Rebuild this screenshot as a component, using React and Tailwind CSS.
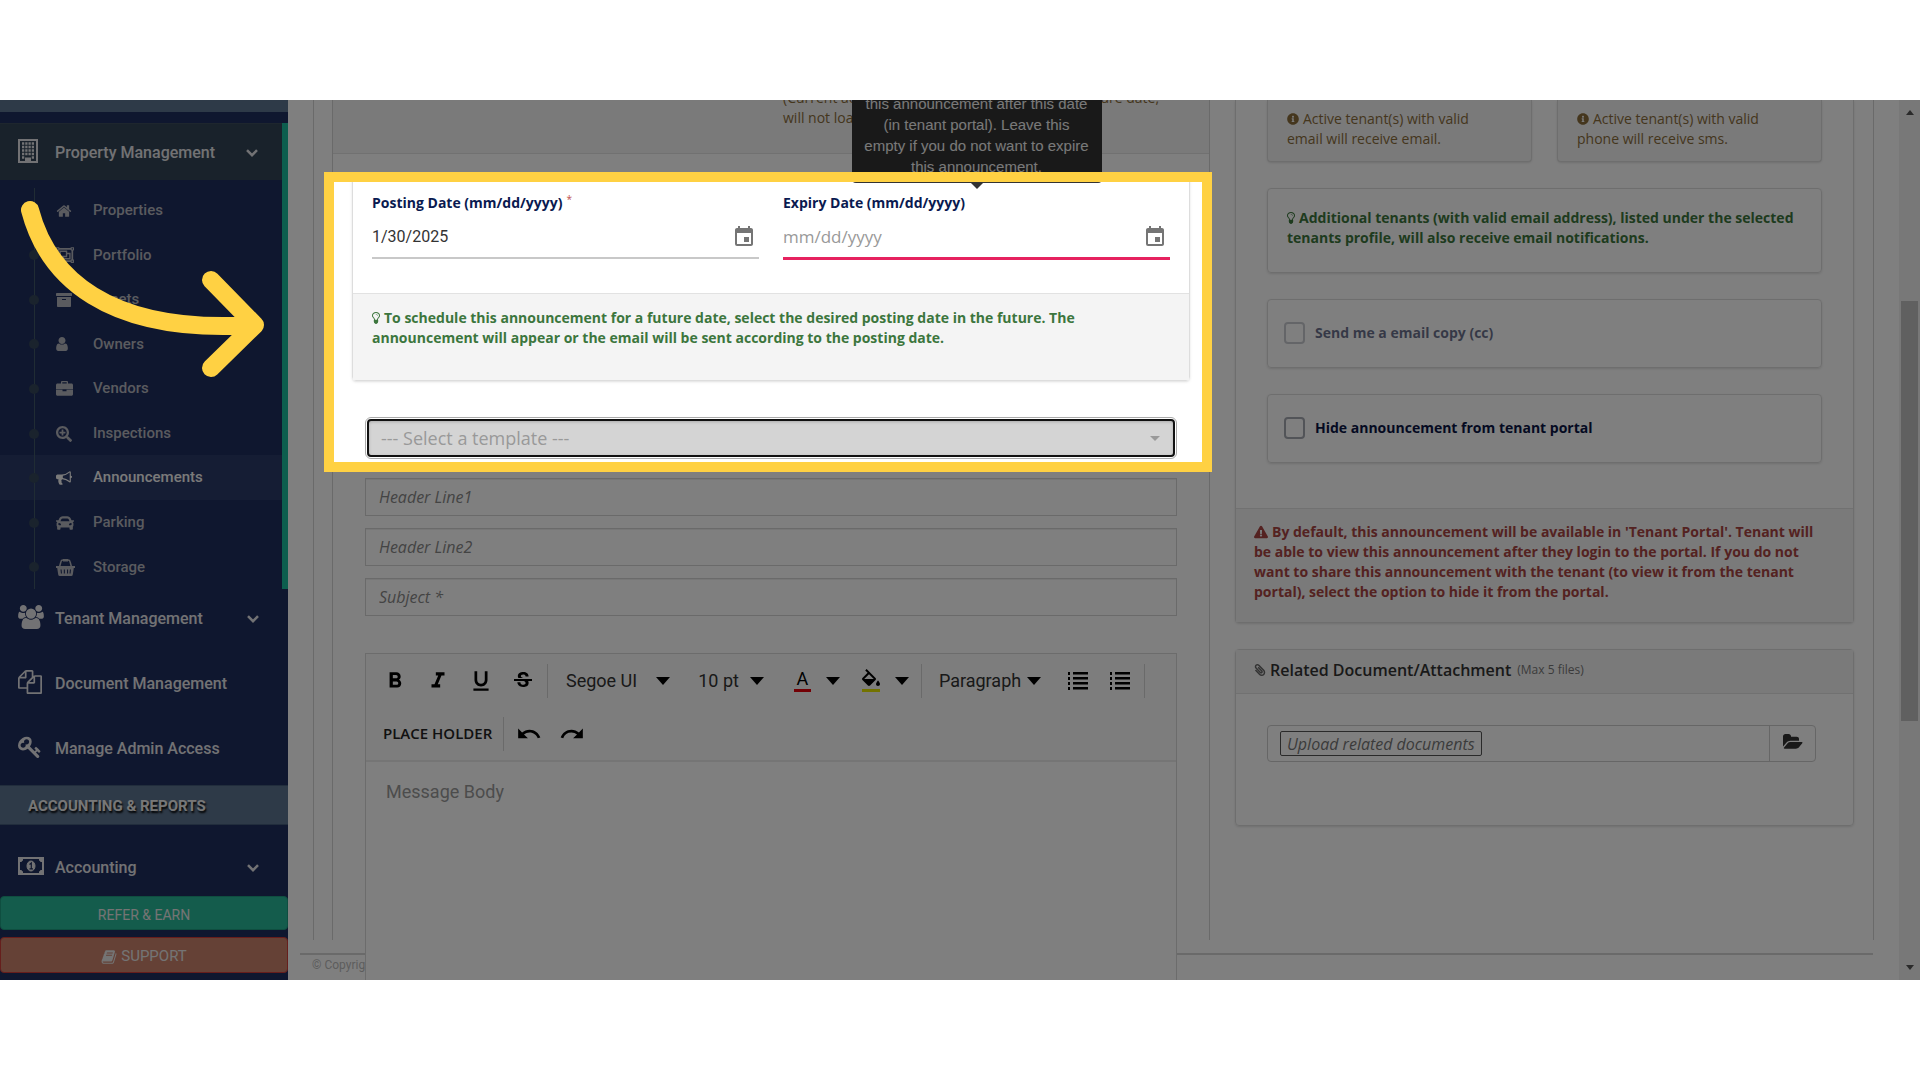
import React from "react";
import {
  FaRegObjectGroup, FaArchive, FaSearchPlus, FaCar,
  FaInfoCircle, FaPaperclip, FaExclamationTriangle,
} from "react-icons/fa";
import {
  MdFormatBold, MdFormatItalic, MdFormatUnderlined, MdStrikethroughS,
  MdUndo, MdRedo, MdEvent,
} from "react-icons/md";

const HOME = "M1472 992v480q0 26-19 45t-45 19h-384v-384h-256v384h-384q-26 0-45-19t-19-45v-480q0-1 .5-3t.5-3l575-474 575 474q1 2 1 6zm223-69l-62 74q-8 9-21 11h-3q-13 0-21-7l-692-577-692 577q-12 8-24 7-13-2-21-11l-62-74q-8-10-7-23.5t11-21.5l719-599q32-26 76-26t76 26l244 204v-195q0-14 9-23t23-9h192q14 0 23 9t9 23v408l219 182q10 8 11 21.5t-7 23.5z";
const USER = "M1536 1399q0 109-62.5 187t-150.5 78h-854q-88 0-150.5-78t-62.5-187q0-85 8.5-160.5t31.5-152 58.5-131 94-89 134.5-34.5q131 128 313 128t313-128q76 0 134.5 34.5t94 89 58.5 131 31.5 152 8.5 160.5zm-256-887q0 159-112.5 271.5t-271.5 112.5-271.5-112.5-112.5-271.5 112.5-271.5 271.5-112.5 271.5 112.5 112.5 271.5z";
const BULLHORN = "M1664 640q53 0 90.5 37.5t37.5 90.5-37.5 90.5-90.5 37.5v384q0 52-38 90t-90 38q-417-347-812-380-58 19-91 66t-31 100.5 40 92.5q-20 33-23 65.5t6 58 33.5 55 48 50 61.5 50.5q-29 58-111.5 83t-168.5 11.5-132-55.5q-7-23-29.5-87.5t-32-94.5-23-89-15-101 3.5-98.5 22-110.5h-122q-66 0-113-47t-47-113v-192q0-66 47-113t113-47h480q435 0 896-384 52 0 90 38t38 90v384zm-128 604v-954q-394 302-768 343v270q377 42 768 341z";
const USERS = "M593 896q-162 5-265 128h-134q-82 0-138-40.5t-56-118.5q0-353 124-353 6 0 43.5 21t97.5 42.5 119 21.5q67 0 133-23-5 37-5 66 0 139 81 256zm1071 637q0 120-73 189.5t-194 69.5h-874q-121 0-194-69.5t-73-189.5q0-53 3.5-103.5t14-109 26.5-108.5 43-97.5 62-81 85.5-53.5 111.5-20q10 0 43 21.5t73 48 107 48 135 21.5 135-21.5 107-48 73-48 43-21.5q61 0 111.5 20t85.5 53.5 62 81 43 97.5 26.5 108.5 14 109 3.5 103.5zm-1024-1277q0 106-75 181t-181 75-181-75-75-181 75-181 181-75 181 75 75 181zm704 384q0 159-112.5 271.5t-271.5 112.5-271.5-112.5-112.5-271.5 112.5-271.5 271.5-112.5 271.5 112.5 112.5 271.5zm576 225q0 78-56 118.5t-138 40.5h-134q-103-123-265-128 81-117 81-256 0-29-5-66 66 23 133 23 59 0 119-21.5t97.5-42.5 43.5-21q124 0 124 353zm-128-609q0 106-75 181t-181 75-181-75-75-181 75-181 181-75 181 75 75 181z";
const KEY = "M832 512q0-80-56-136t-136-56-136 56-56 136q0 42 19 83-41-19-83-19-80 0-136 56t-56 136 56 136 136 56 136-56 56-136q0-42-19-83 41 19 83 19 80 0 136-56t56-136zm851 704q0 17-49 66t-66 49q-9 0-28.5-16t-36.5-33-38.5-40-24.5-26l-96 96 220 220q28 28 28 68 0 42-39 81t-81 39q-40 0-68-28l-671-671q-176 131-365 131-163 0-265.5-102.5t-102.5-265.5q0-160 95-313t248-248 313-95q163 0 265.5 102.5t102.5 265.5q0 189-131 365l355 355 96-96q-3-3-26-24.5t-40-38.5-33-36.5-16-28.5q0-17 49-66t66-49q13 0 23 10 6 6 46 44.5t82 79.5 86.5 86 73 78 28.5 41z";
const FILES = "M1696 384q40 0 68 28t28 68v1216q0 40-28 68t-68 28h-960q-40 0-68-28t-28-68v-288h-544q-40 0-68-28t-28-68v-672q0-40 20-88t48-76l408-408q28-28 76-48t88-20h416q40 0 68 28t28 68v328q68-40 128-40h416zm-544 213l-299 299h299v-299zm-640-384l-299 299h299v-299zm196 647l316-316v-416h-384v416q0 40-28 68t-68 28h-416v640h512v-256q0-40 20-88t48-76zm956 804v-1152h-384v416q0 40-28 68t-68 28h-416v640h896z";
const BULB = "M1120 576q0 13-9.5 22.5t-22.5 9.5-22.5-9.5-9.5-22.5q0-46-54-71t-106-25q-13 0-22.5-9.5t-9.5-22.5 9.5-22.5 22.5-9.5q50 0 99.5 16t87 54 37.5 90zm160 0q0-72-34.5-134t-90-101.5-123-62-136.5-22.5-136.5 22.5-123 62-90 101.5-34.5 134q0 101 68 180 10 11 30.5 33t30.5 33q128 153 141 298h228q13-145 141-298 10-11 30.5-33t30.5-33q68-79 68-180zm128 0q0 155-103 268-45 49-74.5 87t-59.5 95.5-34 107.5q47 28 47 82 0 37-25 64 25 27 25 64 0 52-45 81 13 23 13 47 0 46-31.5 71t-77.5 25q-20 44-60 70t-87 26-87-26-60-70q-46 0-77.5-25t-31.5-71q0-24 13-47-45-29-45-81 0-37 25-64-25-27-25-64 0-54 47-82-4-50-34-107.5t-59.5-95.5-74.5-87q-103-113-103-268 0-99 44.5-184.5t117-142 164-89 186.5-32.5 186.5 32.5 164 89 117 142 44.5 184.5z";
const BOOK = "M1703 478q40 57 18 129l-275 906q-19 64-76.5 107.5t-122.5 43.5h-923q-77 0-148.5-53.5t-99.5-131.5q-24-67-2-127 0-4 3-27t4-37q1-8-3-21.5t-3-19.5q2-11 8-21t16.5-23.5 16.500-23.500q23-38 45-91.500t30-91.500q3-10 .5-30t-.5-28q3-11 17-28t17-23q21-36 42-92t25-90q1-9-2.5-32t.5-28q4-13 22-30.5t22-22.5q19-26 42.5-84.5t27.5-96.500q1-8-3-25.500t-2-26.500q2-8 9-18t18-23 17-21q8-12 16.500-30.500t15-35 16-36 19.500-32 26.500-23.500 36-11.500 47.500 5.500l-1 3q38-9 51-9h761q74 0 114 56t18 130l-274 906q-36 119-71.500 153.500t-128.500 34.500h-869q-27 0-38 15-11 16-1 43 24 70 144 70h923q29 0 56-15.500t35-41.500l300-987q7-22 5-57 38 15 59 43zm-1064 2q-4 13 2 22.500t20 9.500h608q13 0 25.500-9.500t16.500-22.500l21-64q4-13-2-22.500t-20-9.500h-608q-13 0-25.500 9.500t-16.500 22.500zm-83 256q-4 13 2 22.500t20 9.500h608q13 0 25.500-9.500t16.500-22.500l21-64q4-13-2-22.500t-20-9.500h-608q-13 0-25.500 9.500t-16.500 22.500z";
const FOLDER = "M1879 952q0 31-31 66l-336 396q-43 51-120.5 86.500t-143.500 35.500h-1088q-34 0-60.500-13t-26.500-43q0-31 31-66l336-396q43-51 120.500-86.500t143.500-35.500h1088q34 0 60.500 13t26.500 43zm-343-344v160h-832q-94 0-197 47.500t-164 119.500l-337 396-5 6q0-4-.5-12.500t-.5-12.500v-960q0-92 66-158t158-66h320q92 0 158 66t66 158v32h544q92 0 158 66t66 158z";
const PAINT = "M16.560 8.940L7.620 0 6.210 1.410l2.380 2.380-5.150 5.150c-.59.59-.59 1.540 0 2.120l5.500 5.500c.29.29.68.44 1.060.44s.77-.15 1.060-.44l5.500-5.500c.59-.58.59-1.530 0-2.120zM5.210 10L10 5.210 14.790 10H5.210zM19 11.500s-2 2.170-2 3.500c0 1.100.9 2 2 2s2-.9 2-2c0-1.330-2-3.500-2-3.500z";

function Glyph({ d, box = "0 0 1792 1792", className }) {
  return (
    <svg viewBox={box} fill="currentColor" className={className} aria-hidden="true">
      <path d={d} />
    </svg>
  );
}

function Building() {
  return (
    <svg viewBox="0 0 20 24" className="h-6 w-5" fill="none" stroke="currentColor" aria-hidden="true">
      <path d="M1 1h18v22H1z" strokeWidth="2" />
      <path d="M4 4.500h12M4 8h12M4 11.500h12M4 15h12" strokeWidth="2.500" strokeDasharray="2.250 1" />
      <path d="M4 18.500h2.250M13.750 18.500H16" strokeWidth="2.500" />
      <path d="M7 20.500h6" strokeWidth="4" />
    </svg>
  );
}

function Briefcase() {
  return (
    <svg viewBox="0 0 17 15" className="h-[15px] w-[17px]" fill="currentColor" aria-hidden="true">
      <path d="M5 2.500V1.200C5 .5 5.500 0 6.200 0h4.600c.7 0 1.200.5 1.200 1.200v1.300h3.500c.8 0 1.500.7 1.500 1.500v4.200H0V4c0-.8.700-1.500 1.500-1.500zm1.300 0h4.400V1.300H6.300zM0 8.700h6.500v1.500h4V8.700H17v4.500c0 .8-.7 1.500-1.500 1.500h-14C.7 14.700 0 14 0 13.200z" />
    </svg>
  );
}

function Basket() {
  return (
    <svg viewBox="0 0 19 17" className="h-[17px] w-[19px]" aria-hidden="true">
      <path d="M3.500 8L5 2.500Q5.300 1 7 1h5q1.700 0 2 1.500L15.500 8" fill="none" stroke="currentColor" strokeWidth="1.500" />
      <path d="M7 0h5v2.500H7zM0 7h19v2h-1.200l-1 6.500q-.2 1.500-1.600 1.500H3.800q-1.400 0-1.600-1.500L1.200 9H0zm4.500 3.500l.4 4h1.100l-.4-4zm3.300 0v4h1.100v-4zm3.200 0v4h1.100v-4zm2.900 0l-.4 4h1.100l.4-4z" fill="currentColor" fillRule="evenodd" />
    </svg>
  );
}

function Banknote() {
  return (
    <svg viewBox="0 0 26 18" className="h-[18px] w-[26px]" fill="none" stroke="currentColor" aria-hidden="true">
      <path d="M1 1h24v16H1z" strokeWidth="2" />
      <path d="M1 1h4a4 4 0 0 1-4 4zM25 1h-4a4 4 0 0 0 4 4zM1 17h4a4 4 0 0 0-4-4zM25 17h-4a4 4 0 0 1 4-4z" fill="currentColor" />
      <ellipse cx="13" cy="9" rx="4" ry="5" fill="currentColor" />
      <path d="M11.500 7.500 13.300 6v5.500M11.500 11.800h3.500" stroke="#1f2e5e" strokeWidth="1.200" />
    </svg>
  );
}

function Chevron() {
  return (
    <svg viewBox="0 0 12 8" className="h-2 w-3" fill="none" stroke="currentColor" strokeWidth="2.500" aria-hidden="true">
      <path d="M1 1.200l5 5 5-5" />
    </svg>
  );
}

function Caret({ className = "h-2 w-3.5" }) {
  return (
    <svg viewBox="0 0 14 8" preserveAspectRatio="none" fill="currentColor" className={className} aria-hidden="true">
      <path d="M0 0h14L7 8z" />
    </svg>
  );
}

function ListLines() {
  return (
    <svg viewBox="0 0 20 20" className="h-5 w-5" fill="currentColor" aria-hidden="true">
      <path d="M5 1h15v2.500H5zM5 6h15v2.500H5zM5 11h15v2.500H5zM5 16h15v2.500H5zM0 1h2v3H0zM0 6h2v3H0zM0 11h2v3H0zM0 16h2v3H0z" />
    </svg>
  );
}

function Bulb() {
  return <Glyph d={BULB} box="384 0 1024 1792" className="mr-1 inline h-3.5 w-2 align-[-2px]" />;
}

const subItems = [
  { label: "Properties", icon: <Glyph d={HOME} className="h-4 w-4" /> },
  { label: "Portfolio", icon: <FaRegObjectGroup className="h-[18px] w-[18px]" /> },
  { label: "Assets", icon: <FaArchive className="h-4 w-4" /> },
  { label: "Owners", icon: <Glyph d={USER} box="256 128 1280 1536" className="h-3.5 w-3" /> },
  { label: "Vendors", icon: <Briefcase /> },
  { label: "Inspections", icon: <FaSearchPlus className="h-4 w-4" /> },
  { label: "Announcements", icon: <Glyph d={BULLHORN} className="h-4 w-4" />, active: true },
  { label: "Parking", icon: <FaCar className="h-[18px] w-[18px]" /> },
  { label: "Storage", icon: <Basket /> },
];

function NavRow({ icon, label, chevron, className }) {
  return (
    <a href="#" className={`flex items-center pl-[18px] text-base font-medium text-[#e4e4e8] ${className}`}>
      <span className="flex w-[37px] shrink-0 pb-1">{icon}</span>
      <span className="flex-1">{label}</span>
      {chevron && <Chevron />}
    </a>
  );
}

function Sidebar() {
  return (
    <nav className="flex w-72 shrink-0 flex-col overflow-hidden bg-[#1f2e5e] font-[Roboto,sans-serif]">
      <div className="h-3 shrink-0 bg-[#5c7490]" />
      <div className="mt-[11px] shrink-0 border-r-[6px] border-[#1abc9c]">
        <NavRow icon={<Building />} label="Property Management" chevron className="h-[57px] border-t border-[#3c4c5c] bg-[#324456] pt-0.5 pr-6" />
        <ul className="relative mt-2 grid h-[401px] grid-rows-9">
          <li aria-hidden="true" className="absolute top-0 bottom-0 left-[34px] w-px bg-[#415868]" />
          {subItems.map((item, i) => (
            <li key={item.label} className={item.active ? "bg-[#2b3a68]" : ""}>
              <a
                href="#"
                className={`relative flex h-full items-center pt-px pl-14 text-[15px] font-medium ${item.active ? "text-[#f4f4f4]" : "text-[#b4b6be]"}`}
              >
                {i > 0 && <span className="absolute left-[29px] h-2.5 w-2.5 rounded-full bg-[#34465a]" />}
                <span className="flex w-[37px] shrink-0">{item.icon}</span>
                {item.label}
              </a>
            </li>
          ))}
        </ul>
      </div>
      <NavRow icon={<Glyph d={USERS} box="0 0 1920 1792" className="h-6 w-[26px]" />} label="Tenant Management" chevron className="h-[65px] shrink-0 pr-[29px] pb-1.5" />
      <NavRow icon={<Glyph d={FILES} className="h-6 w-6" />} label="Document Management" className="h-[65px] shrink-0 pb-1.5" />
      <NavRow icon={<Glyph d={KEY} className="h-6 w-6" />} label="Manage Admin Access" className="h-[65px] shrink-0 pb-1.5" />
      <h2 className="mt-px flex h-10 shrink-0 items-center border-y border-[#435a78] bg-[#5c7490] pt-1 pl-7 text-[15px] font-bold text-[#eee] [text-shadow:1px_2px_2px_#000]">
        ACCOUNTING &amp; REPORTS
      </h2>
      <NavRow icon={<Banknote />} label="Accounting" chevron className="h-[70px] shrink-0 pt-4 pr-[29px]" />
      <div className="mt-auto flex flex-col gap-[7px] pb-[7px] text-[#e8e8e8]">
        <button className="h-[34px] rounded border border-[#1f9c80] bg-[#28b899] pt-[3px] text-sm">REFER &amp; EARN</button>
        <button className="flex h-9 items-center justify-center gap-1 rounded border border-[#cc3c38] bg-[#ca826c] pt-1 text-[15px]">
          <Glyph d={BOOK} className="h-4 w-4" />
          SUPPORT
        </button>
      </div>
    </nav>
  );
}

function DateField({ id, label, required, value, placeholder, focused, tip }) {
  return (
    <div className="relative">
      {tip && (
        <div role="tooltip" className="absolute bottom-full left-1/2 z-20 w-[250px] -translate-x-1/2 rounded bg-[#333] pt-1 pb-1.5 text-center font-['Liberation_Sans',sans-serif] text-[15px] leading-[21px] whitespace-pre-line text-[#f2f2f2]">
          {tip}
          <span className="absolute top-full left-1/2 -ml-1.5 text-[#333]">
            <Caret className="block h-1.5 w-3" />
          </span>
        </div>
      )}
      <label htmlFor={id} className="block pt-2.5 leading-5 font-bold text-[#0a1a50]">
        {label}
        {required && <sup className="ml-1 text-[10px] font-normal text-[#c0504d]">*</sup>}
      </label>
      <div className={`mt-1 flex items-center justify-between pr-[3px] ${focused ? "h-[43px] border-b-[3px] border-[#e6225f]" : "h-[42px] border-b-2 border-[#c8c8c8]"}`}>
        <input
          id={id}
          defaultValue={value}
          placeholder={placeholder}
          className={`min-w-0 flex-1 bg-transparent text-[#333] outline-none placeholder:text-[#999] ${value ? "font-[Roboto,sans-serif] text-base" : "text-[17px]"}`}
        />
        <button aria-label={`Pick ${label}`} className="text-[#757575]">
          <MdEvent className="h-6 w-6" />
        </button>
      </div>
    </div>
  );
}

function Divider() {
  return <span className="h-[34px] w-px bg-[#d4d4d4]" />;
}

function Drop({ children, className }) {
  return (
    <button className={`flex items-center ${className}`}>
      {children}
      <Caret className="h-2 w-3.5 text-black" />
    </button>
  );
}

function Editor() {
  return (
    <section className="relative z-10 mt-[37px] h-[340px] shrink-0 border border-[#d8d8d8] bg-white font-[Roboto,sans-serif] text-lg text-[#333]">
      <div className="border-b-2 border-[#ebebeb] bg-[#fafafa] text-black">
        <div className="flex h-[53px] items-center pl-4">
          <button aria-label="Bold" className="mr-[17px]"><MdFormatBold className="h-[26px] w-[26px]" /></button>
          <button aria-label="Italic" className="mr-[17px]"><MdFormatItalic className="h-[26px] w-[26px]" /></button>
          <button aria-label="Underline" className="mr-[17px]"><MdFormatUnderlined className="h-[26px] w-[26px]" /></button>
          <button aria-label="Strikethrough" className="mr-3"><MdStrikethroughS className="h-6 w-6" /></button>
          <Divider />
          <div className="flex flex-1 items-center pl-[18px] text-[#333]">
            <Drop className="mr-7 gap-[19px]">Segoe UI</Drop>
            <Drop className="mr-[30px] gap-[11px]">10 pt</Drop>
            <button aria-label="Text colour" className="mr-[22px] flex items-center gap-[15px] text-black">
              <span className="w-[17px] border-b-[3px] border-red-600 text-center leading-[20px]">A</span>
              <Caret />
            </button>
            <button aria-label="Fill colour" className="mr-3 flex items-center gap-[15px] text-black">
              <span className="flex h-[23px] w-[18px] justify-center border-b-[3px] border-[#e6e600]">
                <Glyph d={PAINT} box="3 0 18 17" className="h-[17px] w-[18px] shrink-0" />
              </span>
              <Caret />
            </button>
            <Divider />
            <Drop className="mr-[27px] ml-[17px] gap-1.5">Paragraph</Drop>
            <button aria-label="Ordered list" className="mr-[22px] text-black"><ListLines /></button>
            <button aria-label="Unordered list" className="mr-3.5 text-black"><ListLines /></button>
            <Divider />
          </div>
        </div>
        <div className="flex h-[53px] items-center pl-[17px]">
          <button className="mr-[11px] font-['Open_Sans',sans-serif] text-[15px] font-semibold text-[#222]">PLACE HOLDER</button>
          <Divider />
          <button aria-label="Undo" className="mr-[17px] ml-3"><MdUndo className="h-[26px] w-[26px]" /></button>
          <button aria-label="Redo"><MdRedo className="h-[26px] w-[26px]" /></button>
        </div>
      </div>
      <textarea aria-label="Message Body" placeholder="Message Body" className="block h-40 w-full resize-none bg-transparent px-5 py-4 outline-none placeholder:text-[#999]" />
    </section>
  );
}

function LeftPanel() {
  return (
    <div className="relative flex min-w-0 flex-col border-x border-[#d4d4d4]">
      <div className="grid h-[54px] shrink-0 grid-cols-2 content-end gap-6 border-b border-[#e2e2e2] bg-[#f4f4f4] px-[39px] pb-[25px] leading-5 text-[#8a6d3b]">
        <p className="col-start-2">
          (Current active tenants only, tenants with any future date,
          <br />
          will not load)
        </p>
      </div>
      <div className="mx-[19px] mt-[21px] flex h-[206px] shrink-0 flex-col rounded border border-[#ddd] shadow-sm">
        <div className="grid flex-1 grid-cols-2 gap-6 px-[19px] pt-[7px]">
          <DateField id="posting" label="Posting Date (mm/dd/yyyy)" required value="1/30/2025" />
          <DateField
            id="expiry"
            label="Expiry Date (mm/dd/yyyy)"
            placeholder="mm/dd/yyyy"
            focused
            tip={"this announcement after this date\n(in tenant portal). Leave this\nempty if you do not want to expire\nthis announcement."}
          />
        </div>
        <p className="h-[87px] border-t border-[#e2e2e2] bg-[#f4f4f4] px-[19px] pt-3.5 leading-5 font-bold text-[#3c763d]">
          <Bulb />
          To schedule this announcement for a future date, select the desired posting date in the future. The announcement will appear or the email will be sent according to the posting date.
        </p>
      </div>
      <div className="flex flex-col px-8">
        <div className="relative mt-9 rounded-md border border-[#aaa] p-px">
          <select aria-label="Template" defaultValue="" className="block h-[38px] w-full appearance-none rounded border-2 border-[#111] bg-[#d4d4d4] px-3 text-lg text-[#999] shadow-[inset_0_1px_3px_#aaa] outline-none">
            <option value="">--- Select a template ---</option>
          </select>
          <span className="pointer-events-none absolute inset-y-0 right-4 flex items-center text-[#999]">
            <Caret className="h-[5px] w-2.5" />
          </span>
        </div>
        <div className="mt-[19px] flex flex-col gap-3">
          {["Header Line1", "Header Line2", "Subject *"].map((t) => (
            <input key={t} aria-label={t} placeholder={t} className="h-[38px] border border-[#d4d4d4] bg-transparent px-[13px] text-base italic placeholder:text-[#888] shadow-[inset_0_1px_1px_#eee]" />
          ))}
        </div>
        <Editor />
      </div>
      <div className="pointer-events-none absolute top-[72px] -right-[3px] -left-[9px] z-30 h-[300px] border-10 border-[#ffd143] shadow-[0_0_0_4000px_rgba(0,0,0,0.5)]" />
    </div>
  );
}

function TickRow({ id, label, className }) {
  return (
    <div className={`flex h-[69px] items-center gap-2.5 rounded border border-[#ddd] px-4 pb-px shadow-sm ${className}`}>
      <input id={id} type="checkbox" className="h-[22px] w-[21px] appearance-none rounded border-2 border-[#a4a8b0]" />
      <label htmlFor={id} className="font-bold text-[#0a1444]">{label}</label>
    </div>
  );
}

function RightPanel() {
  return (
    <div className="flex min-w-0 flex-col gap-[26px]">
      <div className="flex flex-col rounded-b border border-t-0 border-[#ddd] shadow-sm">
        <div className="flex flex-col gap-[26px] px-[31px] pb-[45px]">
          <div className="grid grid-cols-2 gap-[25px] leading-5 text-[#8a6d3b]">
            {["email will receive email.", "phone will receive sms."].map((t) => (
              <p key={t} className="h-[62px] rounded-b border border-t-0 border-[#ddd] bg-[#f4f4f4] px-[19px] pt-[9px] shadow-sm">
                <FaInfoCircle className="mr-1 inline h-3 w-3 align-[-1px]" />
                Active tenant(s) with valid
                <br />
                {t}
              </p>
            ))}
          </div>
          <p className="h-[85px] rounded border border-[#ddd] px-[19px] pt-[19px] leading-5 font-bold text-[#3c763d] shadow-sm">
            <Bulb />
            Additional tenants (with valid email address), listed under the selected tenants profile, will also receive email notifications.
          </p>
          <TickRow id="cc" label="Send me a email copy (cc)" className="*:opacity-60" />
          <TickRow id="hide" label="Hide announcement from tenant portal" className="" />
        </div>
        <p className="h-[114px] border-t border-[#e2e2e2] bg-[#f4f4f4] pt-[13px] pr-[26px] pl-[18px] leading-5 font-bold text-[#a94442]">
          <FaExclamationTriangle className="mr-1 inline h-3.5 w-3.5 align-[-2px]" />
          By default, this announcement will be available in 'Tenant Portal'. Tenant will be able to view this announcement after they login to the portal. If you do not want to share this announcement with the tenant (to view it from the tenant portal), select the option to hide it from the portal.
        </p>
      </div>
      <section className="h-[177px] rounded border border-[#ddd] shadow-sm">
        <h3 className="flex h-11 items-center border-b border-[#e2e2e2] bg-[#f4f4f4] px-[18px] pb-1 text-base font-semibold text-[#333]">
          <FaPaperclip className="mr-1 h-3 w-3 -scale-x-100 text-[#666]" />
          Related Document/Attachment
          <span className="ml-1.5 text-xs font-normal text-[#777]">(Max 5 files)</span>
        </h3>
        <div className="mt-[31px] mr-[37px] ml-[31px] flex h-[37px] rounded border border-[#ccc]">
          <div className="flex flex-1 items-center pl-3">
            <button className="h-[25px] rounded-xs border border-[#555] px-1.5 text-base leading-none text-[#777] italic">Upload related documents</button>
          </div>
          <button aria-label="Browse files" className="flex w-[46px] items-center justify-center border-l border-[#ccc] pb-1 text-[#333]">
            <Glyph d={FOLDER} box="0 128 1920 1536" className="h-4 w-5" />
          </button>
        </div>
      </section>
    </div>
  );
}

function ScrollBar() {
  return (
    <div className="flex w-[21px] shrink-0 flex-col items-center bg-[#f1f1f1] py-2.5 text-[#555]">
      <Caret className="h-[5px] w-2 rotate-180" />
      <div className="h-[186px]" />
      <div className="h-[420px] w-[17px] bg-[#c1c1c1]" />
      <Caret className="mt-auto h-[5px] w-2" />
    </div>
  );
}

export default function App() {
  return (
    <div className="flex h-screen flex-col bg-white py-[100px] font-['Open_Sans',sans-serif] text-sm">
      <div className="relative flex min-h-0 flex-1 overflow-hidden">
        <Sidebar />
        <main className="flex min-w-0 flex-1 flex-col">
          <div className="mx-[25px] grid min-h-0 flex-1 grid-cols-[878fr_619fr] grid-rows-[minmax(0,1fr)] gap-[25px] border-x border-[#d4d4d4] pr-[19px] pl-[18px]">
            <LeftPanel />
            <RightPanel />
          </div>
          <footer className="mt-[13px] mr-[26px] ml-3 h-[27px] shrink-0 border-t-2 border-[#d4d4d4] pl-3 font-[Roboto,sans-serif] text-xs leading-5 text-[#bbb]">
            © Copyright
          </footer>
        </main>
        <ScrollBar />
        <svg viewBox="0 0 260 200" className="pointer-events-none absolute top-[90px] left-2.5 z-40 h-[200px] w-[260px]" fill="none" stroke="#ffd143" strokeWidth="18" strokeLinecap="round" strokeLinejoin="round" aria-hidden="true">
          <path d="M20 20C37 85 95 145 245 135M201 90l44 45-44 43" />
        </svg>
      </div>
    </div>
  );
}
